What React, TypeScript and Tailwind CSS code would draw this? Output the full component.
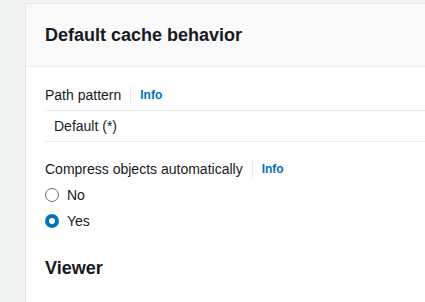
export default function App() {
  return (
    <div
      className="flex h-[302px] w-[425px] overflow-hidden bg-[#f2f3f3] pl-[25px] pt-[3px] text-[#16191f]"
      style={{ fontFamily: '"Liberation Sans", Arial, sans-serif' }}
    >
      <div className="w-[440px] shrink-0 border-l border-t border-[#e4e6e6] bg-white">
        <div className="flex h-[63px] items-center border-b border-[#eaeded] bg-[#fafafa] pl-[19px]">
          <h2 className="text-[18px] font-bold leading-[22px]">Default cache behavior</h2>
        </div>
        <div className="pl-[19px] pt-[18px]">
          <div className="flex h-[20px] items-center text-[14px]">
            <span>Path pattern</span>
            <span className="mx-[9px] h-[18px] border-l border-[#eaeded]" />
            <span className="text-[12px] font-bold text-[#0073bb]">Info</span>
          </div>
          <div className="mt-[5px] flex h-[32px] items-center border-y border-[#eaeded] bg-white pl-[9px] text-[14px]">
            Default (*)
          </div>
          <div className="mt-[17px] flex h-[20px] items-center text-[14px]">
            <span>Compress objects automatically</span>
            <span className="mx-[9px] h-[18px] border-l border-[#eaeded]" />
            <span className="text-[12px] font-bold text-[#0073bb]">Info</span>
          </div>
          <div className="mt-[6px] flex h-[20px] items-center text-[14px]">
            <span className="mr-[8px] h-[14px] w-[14px] rounded-full border-[1.5px] border-[#687078] bg-white" />
            <span>No</span>
          </div>
          <div className="mt-[6px] flex h-[20px] items-center text-[14px]">
            <span className="mr-[8px] flex h-[14px] w-[14px] items-center justify-center rounded-full bg-[#0073bb]">
              <span className="h-[6px] w-[6px] rounded-full bg-white" />
            </span>
            <span>Yes</span>
          </div>
          <h3 className="mt-[26px] text-[18px] font-bold leading-[22px]">Viewer</h3>
        </div>
      </div>
    </div>
  );
}
